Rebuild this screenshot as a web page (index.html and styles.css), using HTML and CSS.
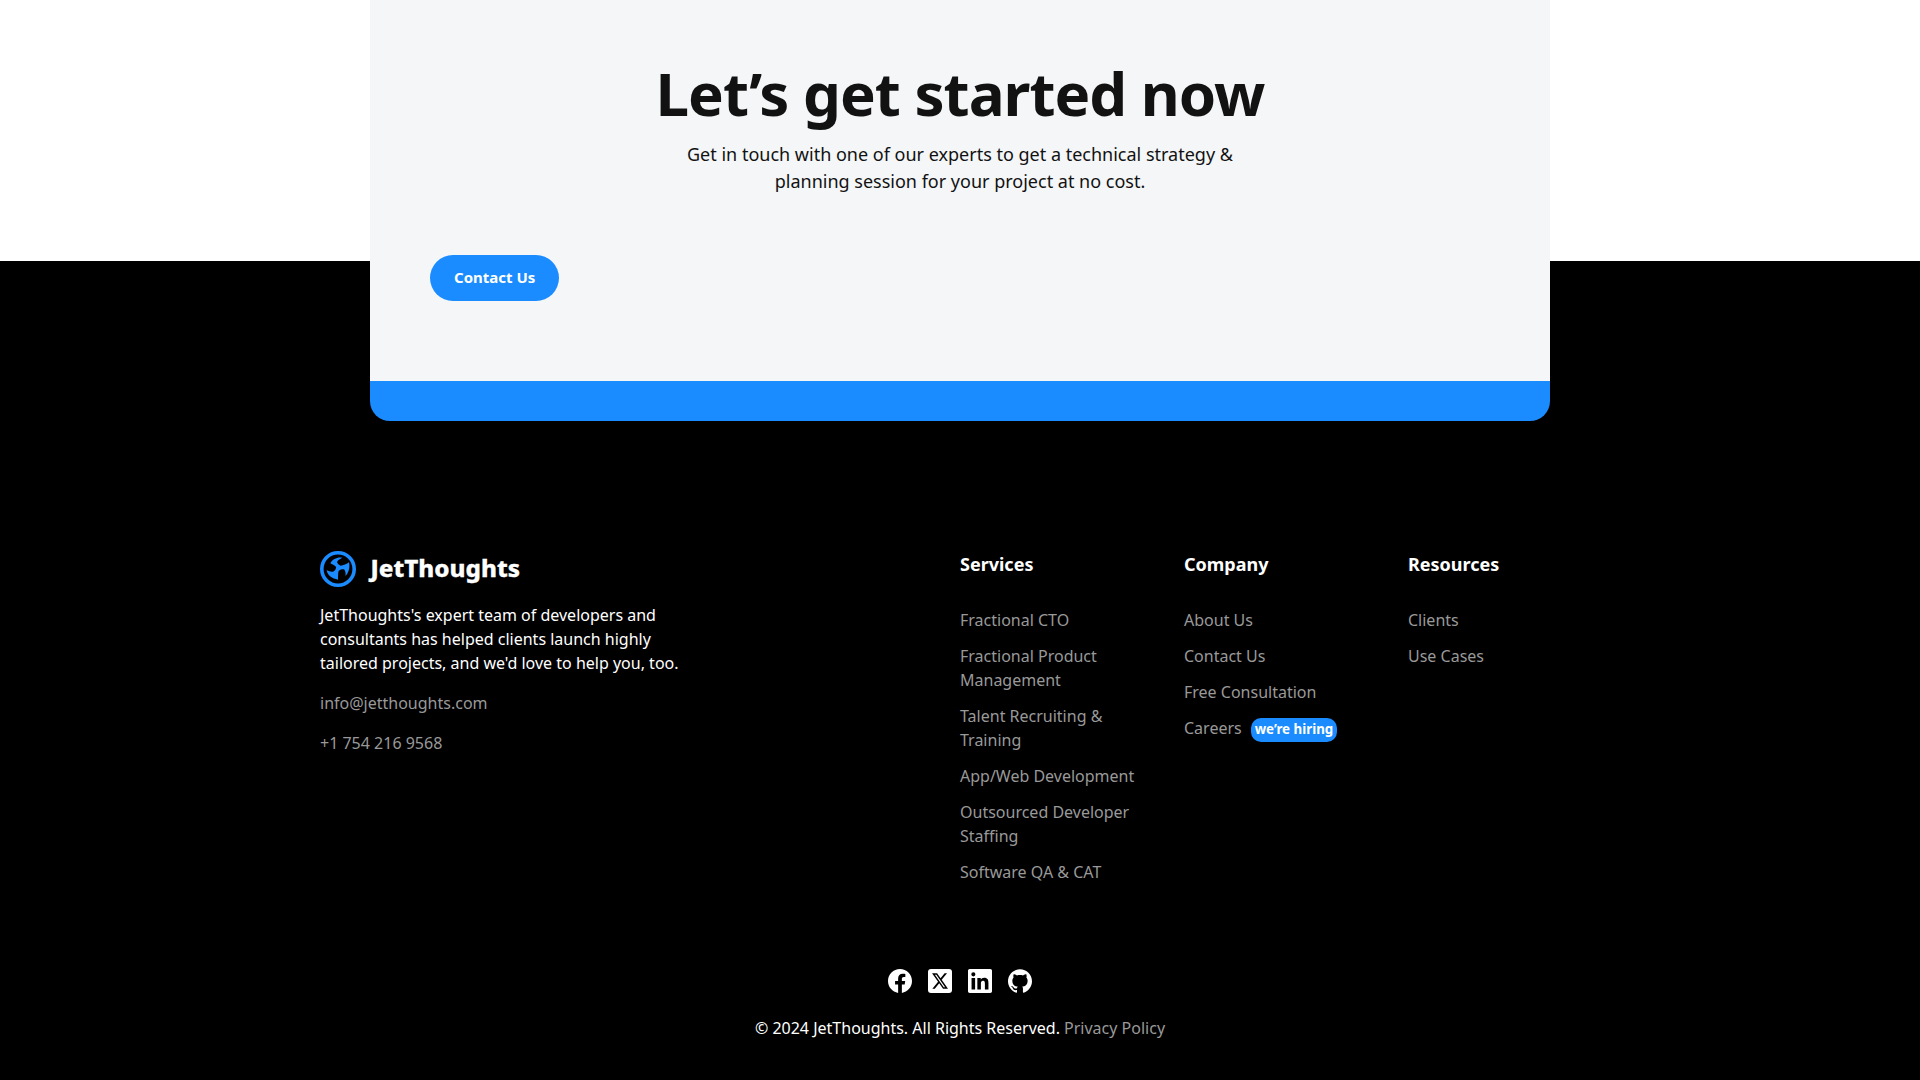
FILE: index.html
```html
<!DOCTYPE html>
<html lang="en">
<head>
<meta charset="utf-8">
<title>JetThoughts</title>
<link rel="stylesheet" href="styles.css">
</head>
<body>
<section class="cta-section">
  <div class="cta-card">
    <h2 class="cta-title">Let’s get started now</h2>
    <p class="cta-text">Get in touch with one of our experts to get a technical strategy &amp; planning session for your project at no cost.</p>
    <a class="button">Contact Us</a>
  </div>
</section>
<footer class="footer">
  <div class="footer-main">
    <div class="about">
      <svg class="logo" width="201" height="36" viewBox="0 0 201 36" role="img" aria-label="JetThoughts">
        <circle cx="18" cy="18" r="16.200" fill="none" stroke="#1a8cff" stroke-width="3.600"/>
        <path fill="#1a8cff" d="M10.300 12.200C12.700 8.300 17.200 5.900 22.300 6.800Q18 8.800 17 11Q17.300 13 20.500 14.700C23.500 14.300 26.700 12.900 29 11.300C30 16 29.300 21 25.500 25C25.700 22 25.500 19.700 24 18.300C22 18.300 19.500 18.700 18.600 20C18 22.500 18 26 18.100 28.700C12 27.500 7.500 24.500 6.600 19.300C9.500 20.500 11.500 21 13.500 20.400Q15.800 19 16.200 16.500Q15.700 14.600 10.300 12.200Z"/>
        <text class="logo-text" x="50.500" y="26" textLength="149.500" lengthAdjust="spacingAndGlyphs">JetThoughts</text>
      </svg>
      <p class="about-text">JetThoughts's expert team of developers and consultants has helped clients launch highly tailored projects, and we'd love to help you, too.</p>
      <a class="link">info@jetthoughts.com</a>
      <a class="link">+1 754 216 9568</a>
    </div>
    <nav class="column">
      <h3 class="column-title">Services</h3>
      <a class="link">Fractional CTO</a>
      <a class="link">Fractional Product Management</a>
      <a class="link">Talent Recruiting &amp; Training</a>
      <a class="link">App/Web Development</a>
      <a class="link">Outsourced Developer Staffing</a>
      <a class="link">Software QA &amp; CAT</a>
    </nav>
    <nav class="column">
      <h3 class="column-title">Company</h3>
      <a class="link">About Us</a>
      <a class="link">Contact Us</a>
      <a class="link">Free Consultation</a>
      <div class="careers"><a class="link">Careers</a><span class="badge">we’re hiring</span></div>
    </nav>
    <nav class="column">
      <h3 class="column-title">Resources</h3>
      <a class="link">Clients</a>
      <a class="link">Use Cases</a>
    </nav>
  </div>
  <div class="social">
    <svg width="24" height="24" viewBox="0 0 24 24" fill="#fff"><path d="M24 12.073c0-6.627-5.373-12-12-12s-12 5.373-12 12c0 5.990 4.388 10.954 10.125 11.854v-8.385H7.078v-3.470h3.047V9.430c0-3.007 1.792-4.669 4.533-4.669 1.312 0 2.686.235 2.686.235v2.953H15.830c-1.491 0-1.956.925-1.956 1.874v2.250h3.328l-.532 3.470h-2.796v8.385C19.612 23.027 24 18.062 24 12.073z"/></svg>
    <svg width="24" height="24" viewBox="0 0 24 24"><rect width="24" height="24" rx="3" fill="#fff"/><path transform="translate(3.100 4) scale(.74 .8)" d="M18.244 0.250h3.308l-7.227 8.260 8.502 11.240H16.170l-5.214-6.817L4.990 19.750H1.680l7.730-8.835L1.254 0.250H8.080l4.713 6.231zm-1.161 17.520h1.833L7.084 2.126H5.117z"/></svg>
    <svg width="24" height="24" viewBox="0 0 24 24" fill="#fff"><path d="M20.447 20.452h-3.554v-5.569c0-1.328-.027-3.037-1.852-3.037-1.853 0-2.136 1.445-2.136 2.939v5.667H9.351V9h3.414v1.561h.046c.477-.900 1.637-1.850 3.370-1.850 3.601 0 4.267 2.370 4.267 5.455v6.286zM5.337 7.433a2.062 2.062 0 1 1 0-4.125 2.062 2.062 0 0 1 0 4.125zM7.119 20.452H3.555V9h3.564v11.452zM22.225 0H1.771C.792 0 0 .774 0 1.729v20.542C0 23.227.792 24 1.771 24h20.451C23.200 24 24 23.227 24 22.271V1.729C24 .774 23.200 0 22.222 0h.003z"/></svg>
    <svg width="24" height="24" viewBox="0 0 24 24" fill="#fff"><path d="M12 .297c-6.630 0-12 5.373-12 12 0 5.303 3.438 9.800 8.205 11.385.6.113.82-.258.82-.577 0-.285-.010-1.040-.015-2.040-3.338.724-4.042-1.610-4.042-1.610C4.422 18.070 3.633 17.700 3.633 17.700c-1.087-.744.084-.729.084-.729 1.205.084 1.838 1.236 1.838 1.236 1.070 1.835 2.809 1.305 3.495.998.108-.776.417-1.305.760-1.605-2.665-.3-5.466-1.332-5.466-5.930 0-1.310.465-2.380 1.235-3.220-.135-.303-.540-1.523.105-3.176 0 0 1.005-.322 3.300 1.230.960-.267 1.980-.399 3-.405 1.020.006 2.040.138 3 .405 2.280-1.552 3.285-1.230 3.285-1.230.645 1.653.240 2.873.120 3.176.765.840 1.230 1.910 1.230 3.220 0 4.610-2.805 5.625-5.475 5.920.420.360.810 1.096.810 2.220 0 1.606-.015 2.896-.015 3.286 0 .315.210.690.825.570C20.565 22.092 24 17.592 24 12.297c0-6.627-5.373-12-12-12"/></svg>
  </div>
  <p class="copyright">© 2024 JetThoughts. All Rights Reserved. <a class="link-inline">Privacy Policy</a></p>
</footer>
</body>
</html>
```
FILE: styles.css
```css
* { box-sizing: border-box; }

body {
  margin: 0;
  height: 1080px;
  overflow: hidden;
  background: #000;
  color: #fff;
  font: 16px/24px "Noto Sans", sans-serif;
}

h2, h3, p { margin: 0; }

.cta-section {
  display: flex;
  justify-content: center;
  background: linear-gradient(#fff 261px, #000 261px);
}

.cta-card {
  display: flex;
  flex-direction: column;
  width: 1180px;
  height: 421px;
  padding: 57px 60px 0;
  border-bottom: 40px solid #1a8cff;
  border-radius: 0 0 20px 20px;
  background: #f4f6f8;
  color: #121212;
}

.cta-title {
  font-size: 60px;
  letter-spacing: -1px;
  line-height: 72px;
  text-align: center;
}

.cta-text {
  align-self: center;
  width: 600px;
  margin-top: 12px;
  font-size: 18px;
  line-height: 27px;
  text-align: center;
}

.button {
  align-self: flex-start;
  margin-top: 60px;
  padding: 0 24px 2px;
  border-radius: 23px;
  background: #1a8cff;
  color: #fff;
  font-size: 15px;
  font-weight: 700;
  line-height: 44px;
}

.footer-main {
  display: grid;
  grid-template-columns: 608px repeat(3, 192px);
  column-gap: 32px;
  width: 1280px;
  margin: 130px auto 0;
}

.about {
  display: flex;
  flex-direction: column;
  gap: 16px;
  width: 380px;
}

.logo { display: block; overflow: visible; }

.logo-text {
  fill: #fff;
  stroke: #fff;
  stroke-width: .3px;
  font-size: 23.500px;
  font-weight: 800;
}

.column {
  display: flex;
  flex-direction: column;
  gap: 12px;
}

.column-title {
  margin-bottom: 18px;
  font-size: 18px;
  line-height: 27px;
}

.link, .link-inline { color: #999; }

.careers { display: flex; }

.badge {
  height: 24px;
  margin: 2px 0 -2px 9px;
  padding: 0 4px;
  border-radius: 10px;
  background: #1a8cff;
  font-size: 13.333px;
  font-weight: 700;
  line-height: 22px;
}

.social {
  display: flex;
  justify-content: center;
  gap: 16px;
  margin-top: 85px;
}

.copyright {
  margin-top: 23px;
  text-align: center;
}
```
